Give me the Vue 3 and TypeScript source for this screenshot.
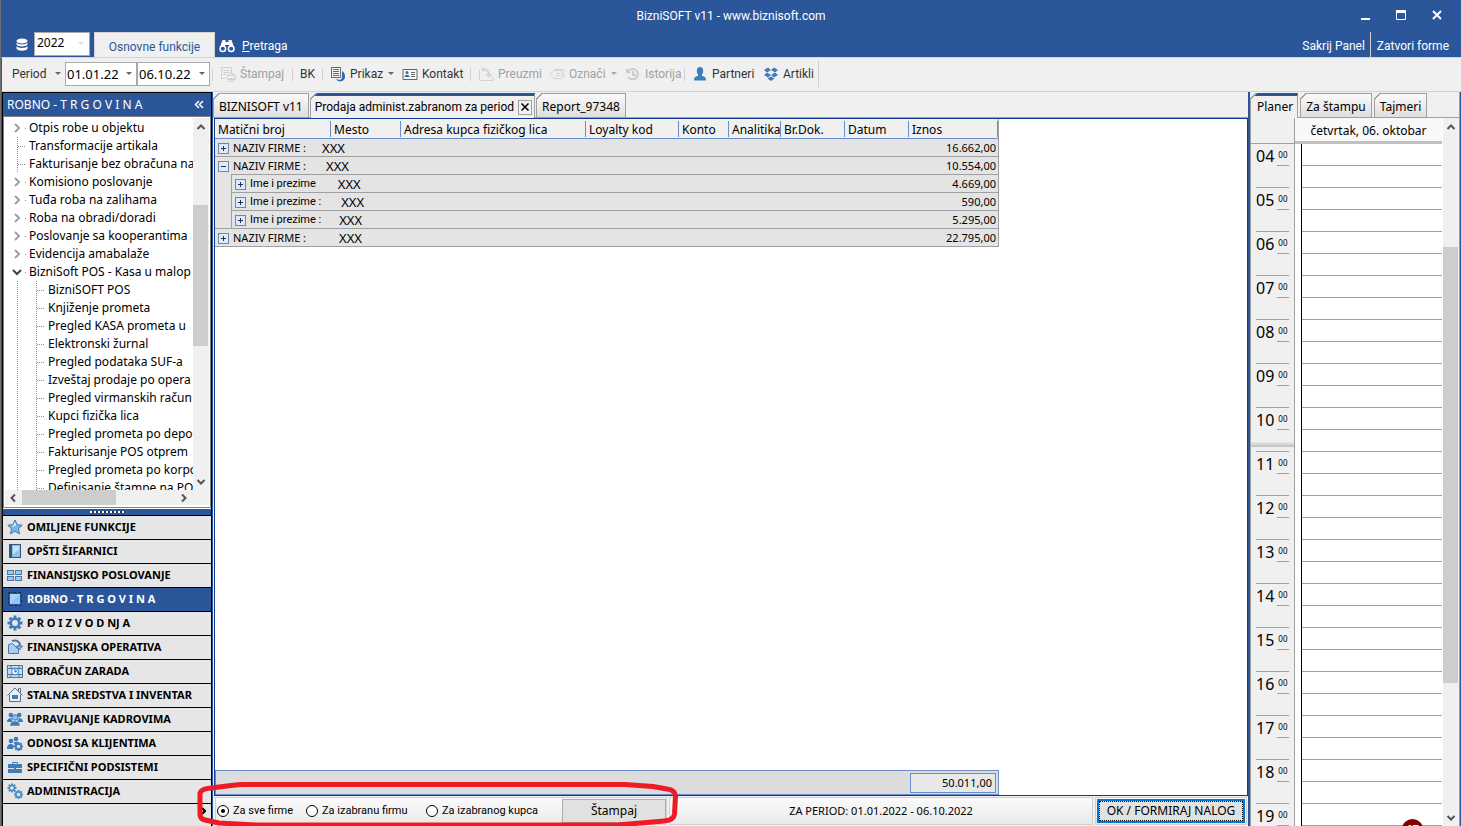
<script setup lang="ts">
import { ref } from 'vue'

interface TreeNode {
  label: string
  level: 0 | 1
  state?: 'closed' | 'open'
}

interface NavItem {
  label: string
  icon: string
  active?: boolean
}

interface ReportRow {
  label: string
  value: string
  gap: number
  amount: string
  kind: 'group' | 'open' | 'child' | 'last'
}

const year = ref('2022')
const dateFrom = ref('01.01.22')
const dateTo = ref('06.10.22')
const scope = ref('sve')

const tree: TreeNode[] = [
  { label: 'Otpis robe u objektu', level: 0, state: 'closed' },
  { label: 'Transformacije artikala', level: 0 },
  { label: 'Fakturisanje bez obračuna na', level: 0 },
  { label: 'Komisiono poslovanje', level: 0, state: 'closed' },
  { label: 'Tuđa roba na zalihama', level: 0, state: 'closed' },
  { label: 'Roba na obradi/doradi', level: 0, state: 'closed' },
  { label: 'Poslovanje sa kooperantima', level: 0, state: 'closed' },
  { label: 'Evidencija amabalaže', level: 0, state: 'closed' },
  { label: 'BizniSoft POS - Kasa u malop', level: 0, state: 'open' },
  { label: 'BizniSOFT POS', level: 1 },
  { label: 'Knjiženje prometa', level: 1 },
  { label: 'Pregled KASA prometa u', level: 1 },
  { label: 'Elektronski žurnal', level: 1 },
  { label: 'Pregled podataka SUF-a', level: 1 },
  { label: 'Izveštaj prodaje po opera', level: 1 },
  { label: 'Pregled virmanskih račun', level: 1 },
  { label: 'Kupci fizička lica', level: 1 },
  { label: 'Pregled prometa po depo', level: 1 },
  { label: 'Fakturisanje POS otprem', level: 1 },
  { label: 'Pregled prometa po korpo', level: 1 },
  { label: 'Definisanje štampe na PO', level: 1 }
]

const gear = (cx: number, cy: number, r: number, w: number, color: string): string => {
  let teeth = ''
  for (let i = 0; i < 8; i++) {
    teeth += `<rect x="${cx - w / 2}" y="${cy - r}" width="${w}" height="${r / 2}" transform="rotate(${i * 45} ${cx} ${cy})" fill="${color}"/>`
  }
  return `${teeth}<circle cx="${cx}" cy="${cy}" r="${r * 0.56}" fill="none" stroke="${color}" stroke-width="${r * 0.32}"/>`
}

const nav: NavItem[] = [
  {
    label: 'OMILJENE FUNKCIJE',
    icon: '<path d="M8 1l2.100 4.700 5.100.5-3.800 3.500 1.100 5.100L8 12.200l-4.500 2.600 1.100-5.100L.8 6.200l5.100-.5z" fill="#7fb4e4" stroke="#3f76b0"/><path d="M8 3l1.300 3.600L5 8z" fill="#d4ebfc"/>'
  },
  {
    label: 'OPŠTI ŠIFARNICI',
    icon: '<rect x="2.500" y="1.500" width="11" height="13" fill="#8fc1ee" stroke="#34557d"/><rect x="2" y="1" width="3" height="14" fill="#34557d"/><path d="M6 3h6v4L6 11z" fill="#c2e0f8"/>'
  },
  {
    label: 'FINANSIJSKO POSLOVANJE',
    icon: '<g fill="#9fc8ee" stroke="#4678ae"><rect x=".5" y="3.500" width="6" height="4"/><rect x="8.500" y="3.500" width="6" height="4"/><rect x=".5" y="9.500" width="6" height="4"/><rect x="8.500" y="9.500" width="6" height="4"/></g>'
  },
  {
    label: 'ROBNO - T R G O V I N A',
    active: true,
    icon: '<rect x="1.500" y="1.500" width="13" height="13" fill="none" stroke="#162e52" stroke-dasharray="3 2"/><rect x="3" y="3" width="10" height="10" fill="#8fc4f6"/><path d="M3 3h10L3 13z" fill="#a9d2f8"/>'
  },
  { label: 'P R O I Z V O D NJ A', icon: gear(8, 8, 7.5, 3, '#3f7cba') },
  {
    label: 'FINANSIJSKA OPERATIVA',
    icon: '<path d="M1.500 5.500l4-1 6 6v4h-10z" fill="#a7cdf0" stroke="#4678ae"/><path d="M5 2c5-1.500 8 1 8 5" fill="none" stroke="#4678ae" stroke-width="2"/><path d="M9.500 7h6L12.500 11z" fill="#8ebdec" stroke="#4678ae"/>'
  },
  {
    label: 'OBRAČUN ZARADA',
    icon: '<rect x=".5" y="2.500" width="15" height="12" fill="#bfdcf5" stroke="#4678ae"/><path d="M1 5.500h14M1 11.500h14M4 3v3M12 3v3M4 11v3M12 11v3" stroke="#4678ae"/><circle cx="8" cy="8.500" r="3.500" fill="#e6f3fd" stroke="#4678ae"/><path d="M8 6v3l2-1" fill="none" stroke="#33608f"/>'
  },
  {
    label: 'STALNA SREDSTVA I INVENTAR',
    icon: '<path d="M.5 8.500L8 1l7.500 7.500M2.500 7.500v7h11v-7M11.500 4.500v-3h2v5" fill="#e9eef4" stroke="#55738f"/><rect x="5" y="8" width="6" height="4" fill="#3f7cba"/>'
  },
  {
    label: 'UPRAVLJANJE KADROVIMA',
    icon: '<g fill="#3f7cba"><circle cx="3.800" cy="4" r="2.300"/><circle cx="12.200" cy="4" r="2.300"/><path d="M0 11c0-3 2-4 4-4l2 4zM16 11c0-3-2-4-4-4l-2 4z"/></g><circle cx="8" cy="6.500" r="2.800" fill="#8ebdec" stroke="#3f7cba"/><path d="M3 15c0-4 2.500-5 5-5s5 1 5 5z" fill="#3f7cba" stroke="#e6e6e6" stroke-width=".5"/>'
  },
  {
    label: 'ODNOSI SA KLIJENTIMA',
    icon: '<g fill="#3f7cba"><circle cx="4" cy="6" r="2.300"/><circle cx="9" cy="4" r="2.300"/><path d="M0 14c0-4 2-5 4-5 1.500 0 2.500 1 3 2l-1 3zM6.500 7.500c3-1.500 5-.5 5 1L8 10z"/></g>' + gear(11.5, 11.5, 4.5, 2, '#3f7cba')
  },
  {
    label: 'SPECIFIČNI PODSISTEMI',
    icon: '<path d="M1 5h14v4H1zM1 10h14v4H1z" fill="#3f7cba"/><path d="M5.500 5V3.500h5V5" fill="none" stroke="#3f7cba"/><rect x="7" y="8.500" width="2" height="2" fill="#3f7cba"/>'
  },
  { label: 'ADMINISTRACIJA', icon: gear(5, 5, 4.5, 2, '#4f8cc6') + gear(11.5, 11.5, 4.5, 2, '#4f8cc6') }
]

const columns: string[] = [
  'Matični broj',
  'Mesto',
  'Adresa kupca fizičkog lica',
  'Loyalty kod',
  'Konto',
  'Analitika',
  'Br.Dok.',
  'Datum',
  'Iznos'
]

const rows: ReportRow[] = [
  { label: 'NAZIV FIRME :', value: 'XXX', gap: 16, amount: '16.662,00', kind: 'group' },
  { label: 'NAZIV FIRME :', value: 'XXX', gap: 20, amount: '10.554,00', kind: 'open' },
  { label: 'Ime i prezime', value: 'XXX', gap: 22, amount: '4.669,00', kind: 'child' },
  { label: 'Ime i prezime :', value: 'XXX', gap: 20, amount: '590,00', kind: 'child' },
  { label: 'Ime i prezime :', value: 'XXX', gap: 18, amount: '5.295,00', kind: 'last' },
  { label: 'NAZIV FIRME :', value: 'XXX', gap: 33, amount: '22.795,00', kind: 'group' }
]

const hours: string[] = Array.from({ length: 16 }, (_, i) => String(i + 4).padStart(2, '0'))
</script>

<template>
  <div class="app">
    <header class="titlebar">
      <span class="title">BizniSOFT v11 - www.biznisoft.com</span>
      <div class="window-buttons">
        <button type="button" aria-label="Minimize">
          <svg width="12" height="12"><path d="M2 10h9" stroke="#fff" stroke-width="2" /></svg>
        </button>
        <button type="button" aria-label="Maximize">
          <svg width="12" height="12"><path d="M1.500 1.500h9v9h-9z" fill="none" stroke="#fff" /><path d="M1 2.500h10" stroke="#fff" stroke-width="3" /></svg>
        </button>
        <button type="button" aria-label="Close">
          <svg width="12" height="12"><path d="M2 2l8 8M10 2l-8 8" stroke="#fff" stroke-width="2" /></svg>
        </button>
      </div>
    </header>

    <nav class="ribbon">
      <svg class="db" width="12" height="14" fill="#fff">
        <ellipse cx="6" cy="3" rx="5.500" ry="2.500" />
        <path d="M.5 4.500c1 2.500 10 2.500 11 0v2c-1 2.500-10 2.500-11 0zM.5 8c1 2.500 10 2.500 11 0v2.500c-1 3-10 3-11 0z" />
      </svg>
      <label class="year">
        <select v-model="year" aria-label="Godina">
          <option>2022</option>
        </select>
        <i class="arrow faint"></i>
      </label>
      <button type="button" class="ribbon-tab">Osnovne funkcije</button>
      <button type="button" class="ribbon-link search">
        <svg width="16" height="14" fill="#fff">
          <path d="M3.500 1h3v2h3V1h3l2.500 7h-5V6H6v2H1z" />
          <circle cx="3.800" cy="9.800" r="2.800" fill="#2b579a" stroke="#fff" stroke-width="1.500" />
          <circle cx="12.200" cy="9.800" r="2.800" fill="#2b579a" stroke="#fff" stroke-width="1.500" />
        </svg>
        <span><u>P</u>retraga</span>
      </button>
      <div class="ribbon-right">
        <button type="button" class="ribbon-link">Sakrij Panel</button>
        <button type="button" class="ribbon-link bordered">Zatvori forme</button>
      </div>
    </nav>

    <div class="toolbar">
      <button type="button" class="tool period">Period<i class="arrow"></i></button>
      <label class="date"><input v-model="dateFrom" aria-label="Od datuma" /><i class="arrow"></i></label>
      <label class="date"><input v-model="dateTo" aria-label="Do datuma" /><i class="arrow"></i></label>
      <button type="button" class="tool sep" disabled>
        <svg width="16" height="16" fill="none" stroke="#d0d0d0">
          <path d="M1.500 1.500h10v6M1.500 1.500v11h4M3.500 4.500h6M3.500 6.500h6M3.500 8.500h3M7.500 9.500h8v4h-8zM9.500 9.500v-2h4v2M9.500 12.500h4v3h-4z" />
        </svg>
        Štampaj
      </button>
      <button type="button" class="tool sep">BK</button>
      <button type="button" class="tool sep">
        <svg width="16" height="16">
          <path d="M12 5v6c0 3-3 3.500-6 2 2 4 9 3 9-2.500 0-2.500-1-4.500-3-5.500z" fill="#2f6db0" />
          <path d="M1.500 1.500h9v10h-9z" fill="#f8f8f8" stroke="#666" />
          <path d="M3 3.500h6M3 5.500h6M3 7.500h6M3 9.500h6" stroke="#666" />
        </svg>
        Prikaz<i class="arrow push"></i>
      </button>
      <button type="button" class="tool">
        <svg width="16" height="16">
          <path d="M1 3.500h14v10H1z" fill="#f8f8f8" stroke="#666" />
          <circle cx="5" cy="6.500" r="1.500" fill="#2f6db0" />
          <path d="M2.500 11c0-3 5-3 5 0z" fill="#2f6db0" />
          <path d="M9 6.500h4M9 8.500h4M9 10.500h4" stroke="#666" />
        </svg>
        Kontakt
      </button>
      <button type="button" class="tool sep" disabled>
        <svg width="16" height="16" fill="none" stroke="#d4d4d4">
          <path d="M1.500 4v10.500H15V11" />
          <path d="M4 3c5 0 7 2 7 6" stroke-width="2" />
          <path d="M7.500 8h7L11 12zM6 1v5L3 3.500z" fill="#d4d4d4" stroke="none" />
        </svg>
        Preuzmi
      </button>
      <button type="button" class="tool" disabled>
        <svg width="16" height="16" fill="none" stroke="#d4d4d4">
          <path d="M1 8.500l4-4h8v8H5zM5 3.500h10v8M7 7.500h4M7 9.500h4" />
        </svg>
        Označi<i class="arrow push grey"></i>
      </button>
      <button type="button" class="tool" disabled>
        <svg width="16" height="16" fill="none" stroke="#cbcbcb" stroke-width="2">
          <path d="M3.500 5a5.200 5.200 0 1 1-.2 6M8 5v4h3" />
          <path d="M1 2v5h5z" fill="#cbcbcb" stroke="none" />
        </svg>
        Istorija
      </button>
      <button type="button" class="tool sep">
        <svg width="16" height="16" fill="#3f7cba">
          <ellipse cx="8" cy="5" rx="3.200" ry="4" />
          <path d="M6 8h4v2c3 .5 4 1.500 4 4.500H2c0-3 1-4 4-4.500z" />
        </svg>
        Partneri
      </button>
      <button type="button" class="tool">
        <svg width="16" height="16" fill="#3f7cba">
          <path d="M1 4l4-2.500L8 4 4 6.500zM8 4l3-2.500L15 4l-3 2.500zM1 9l3-2.500L8 9l-3 2.500zM8 9l4-2.500L15 9l-4 2.500zM4.500 12.500l3.500-2 3.500 2L8 15z" />
        </svg>
        Artikli
      </button>
    </div>

    <main class="workspace">
      <aside class="sidebar">
        <h2 class="side-head">
          <span>ROBNO - T R G O V I N A</span>
          <svg width="10" height="9" fill="none" stroke="#fff" stroke-width="1.500"><path d="M5 1L1.500 4.500 5 8M9 1L5.500 4.500 9 8" /></svg>
        </h2>
        <div class="tree-box">
          <ul class="tree">
            <li v-for="node in tree" :key="node.label" :class="['lvl' + node.level, node.state]">
              <svg v-if="node.state === 'closed'" class="twist" width="10" height="10"><path d="M3 1l4 4-4 4" fill="none" stroke="#a0a0a0" stroke-width="2" /></svg>
              <svg v-if="node.state === 'open'" class="twist" width="10" height="10"><path d="M1 3l4 4 4-4" fill="none" stroke="#404040" stroke-width="2" /></svg>
              <span>{{ node.label }}</span>
            </li>
          </ul>
          <div class="vscroll">
            <svg width="10" height="10"><path d="M1.500 7L5 3.500 8.500 7" fill="none" stroke="#555" stroke-width="2" /></svg>
            <div class="track"><i class="thumb"></i></div>
            <svg width="10" height="10"><path d="M1.500 3L5 6.500 8.500 3" fill="none" stroke="#555" stroke-width="2" /></svg>
          </div>
          <div class="hscroll">
            <svg width="10" height="10"><path d="M7 1.500L3.500 5 7 8.500" fill="none" stroke="#555" stroke-width="2" /></svg>
            <i class="thumb"></i>
            <svg width="10" height="10"><path d="M3 1.500L6.500 5 3 8.500" fill="none" stroke="#555" stroke-width="2" /></svg>
          </div>
        </div>
        <div class="splitter"><i></i></div>
        <button v-for="item in nav" :key="item.label" type="button" :class="['nav-item', { active: item.active }]">
          <svg width="16" height="16" v-html="item.icon"></svg>
          {{ item.label }}
        </button>
        <div class="nav-more">
          <svg width="5" height="8"><path d="M1 1l3 3-3 3" fill="none" stroke="#000" stroke-width="2" /></svg>
        </div>
      </aside>

      <section class="center">
        <div class="tabs">
          <button type="button" class="tab">BIZNISOFT v11</button>
          <div class="tab current">
            <button type="button" class="tab-text">Prodaja administ.zabranom za period</button>
            <button type="button" class="tab-close" aria-label="Zatvori">
              <svg width="10" height="10"><path d="M1.500 1.500l7 7M8.500 1.500l-7 7" stroke="#000" stroke-width="1.500" /></svg>
            </button>
          </div>
          <button type="button" class="tab">Report_97348</button>
        </div>

        <div class="grid-box">
          <table class="report">
            <colgroup>
              <col class="c1" /><col class="c2" /><col class="c3" /><col class="c4" /><col class="c5" />
              <col class="c6" /><col class="c7" /><col class="c7" /><col class="c9" />
            </colgroup>
            <thead>
              <tr>
                <th v-for="col in columns" :key="col" scope="col"><span>{{ col }}</span></th>
              </tr>
            </thead>
            <tbody>
              <tr v-for="(row, i) in rows" :key="i" :class="row.kind">
                <td colspan="8">
                  <div class="cell">
                    <svg class="expander" width="11" height="11">
                      <rect x=".5" y=".5" width="10" height="10" fill="#dfe9f7" stroke="#6c87b0" />
                      <path d="M3 5.500h5" stroke="#1c3560" />
                      <path v-if="row.kind !== 'open'" d="M5.500 3v5" stroke="#1c3560" />
                    </svg>
                    <span class="caption">{{ row.label }}</span>
                    <span class="value" :style="{ marginLeft: row.gap + 'px' }">{{ row.value }}</span>
                  </div>
                </td>
                <td class="amount">{{ row.amount }}</td>
              </tr>
            </tbody>
          </table>
          <div class="grid-foot"><output>50.011,00</output></div>
        </div>

        <footer class="actions">
          <form class="panel options" @submit.prevent>
            <label><input v-model="scope" type="radio" value="sve" name="scope" />Za sve firme</label>
            <label><input v-model="scope" type="radio" value="firma" name="scope" />Za izabranu firmu</label>
            <label><input v-model="scope" type="radio" value="kupac" name="scope" />Za izabranog kupca</label>
            <button type="button" class="print">Štampaj</button>
          </form>
          <div class="panel range">ZA PERIOD: 01.01.2022 - 06.10.2022</div>
          <div class="panel confirm"><button type="button">OK / FORMIRAJ NALOG</button></div>
          <svg class="marker" width="484" height="46" fill="none" stroke="#ed1c24" stroke-width="5" stroke-linejoin="round">
            <path d="M44 4.500H428L456 6.500 470 9Q478 10 478.500 16L477.500 34Q477 40 467 41L438 43.500 420 45H60L22 43 8 40Q3 39 3 34V14Q3 9 14 8L34 5.500Z" />
          </svg>
        </footer>
      </section>

      <aside class="planner">
        <div class="tabs">
          <button type="button" class="tab current solo">Planer</button>
          <button type="button" class="tab">Za štampu</button>
          <button type="button" class="tab">Tajmeri</button>
        </div>
        <div class="day">
          <div class="ruler">
            <div class="corner"></div>
            <div v-for="h in hours" :key="h" class="hour">
              <span>{{ h }}</span><small>00</small>
            </div>
            <i class="now"></i>
          </div>
          <div class="slots">
            <div class="date-head">četvrtak, 06. oktobar</div>
            <div class="lines"></div>
          </div>
          <div class="vscroll tall">
            <svg width="10" height="10"><path d="M1.500 7L5 3.500 8.500 7" fill="none" stroke="#555" stroke-width="2" /></svg>
            <div class="track"><i class="thumb"></i></div>
            <svg width="10" height="10"><path d="M1.500 3L5 6.500 8.500 3" fill="none" stroke="#555" stroke-width="2" /></svg>
          </div>
          <b class="badge">17</b>
        </div>
      </aside>
    </main>
  </div>
</template>

<style>
html,
body {
  background: #f0f0f0;
}
</style>

<style scoped>
.app,
.app * {
  box-sizing: border-box;
}
.app {
  display: flex;
  flex-direction: column;
  height: 100vh;
  overflow: hidden;
  border-left: 1px solid #707070;
  background: #f0f0f0;
  color: #000;
  font: 12px/16px 'Noto Sans', 'Open Sans', sans-serif;
}
button,
input,
select {
  margin: 0;
  padding: 0;
  border: 0;
  border-radius: 0;
  background: none;
  color: inherit;
  font: inherit;
  white-space: nowrap;
}
svg {
  flex: none;
}
.titlebar,
.ribbon-tab,
.ribbon-link,
.tool,
.tab-text,
.options label,
.child .caption,
.last .caption {
  font-family: Roboto, 'Noto Sans', sans-serif;
}
.titlebar {
  position: relative;
  display: flex;
  align-items: center;
  justify-content: center;
  flex: none;
  height: 32px;
  background: #2b579a;
  color: #fff;
}
.window-buttons {
  position: absolute;
  right: 18px;
  top: 9px;
  display: flex;
  gap: 24px;
}
.window-buttons button {
  display: flex;
}
.ribbon {
  display: flex;
  align-items: flex-start;
  flex: none;
  height: 25px;
  background: #2b579a;
  color: #fff;
}
.db {
  margin: 6px 6px 0 15px;
}
.year {
  position: relative;
  width: 56px;
  height: 24px;
  border: 1px solid #a9a9a9;
  background: #fff;
}
.year select {
  width: 100%;
  height: 20px;
  padding: 0 2px;
  appearance: none;
  color: #000;
}
.year .arrow {
  position: absolute;
  right: 5px;
  top: 9px;
}
.arrow {
  flex: none;
  width: 0;
  height: 0;
  border: 3px solid transparent;
  border-top-color: #666;
  border-bottom: 0;
}
.arrow.faint {
  border-top-color: #ddd;
}
.arrow.grey {
  border-top-color: #aaa;
}
.ribbon-tab {
  width: 121px;
  height: 25px;
  margin-left: 4px;
  padding-top: 4px;
  border: 1px solid #d4d4d4;
  border-bottom: 0;
  background: #f0f0f0;
  color: #2b579a;
}
.ribbon-link {
  display: flex;
  align-items: center;
  gap: 7px;
  height: 25px;
  padding-top: 2px;
}
.search {
  margin-left: 4px;
}
.ribbon-right {
  display: flex;
  margin-left: auto;
  padding-right: 7px;
}
.ribbon-right .ribbon-link {
  padding-right: 5px;
}
.ribbon-right .bordered {
  padding-left: 6px;
  border-left: 1px solid #d4d4d4;
}
.toolbar {
  display: grid;
  grid-template-columns: 63px 72px 75px 80px 30px 78px 70px 77px 76px 61px 77px 58px;
  flex: none;
  align-items: center;
  height: 35px;
  padding-bottom: 2px;
  border-top: 1px solid #d4d4d4;
  border-bottom: 1px solid #d4d4d4;
  border-left: 1px solid #2b579a;
  color: #333;
}
.tool {
  position: relative;
  display: flex;
  align-items: center;
  gap: 4px;
  height: 26px;
  padding-left: 2px;
}
.tool:disabled {
  color: #a0a0a0;
}
.tool.sep {
  padding-left: 8px;
}
.tool.sep::before {
  content: '';
  position: absolute;
  left: 0;
  top: 7px;
  height: 13px;
  border-left: 1px solid #d0d0d0;
}
.tool.period {
  justify-content: space-between;
  padding: 0 4px 0 10px;
}
.tool:last-child {
  border-right: 1px solid #d0d0d0;
}
.push {
  position: absolute;
  right: 6px;
  top: 11px;
}
.date {
  display: flex;
  align-items: center;
  height: 24px;
  padding-right: 4px;
  border: 1px solid #a9a9a9;
  background: #fff;
}
.date input {
  flex: 1;
  min-width: 0;
  padding-left: 1px;
  color: #000;
  font-size: 13px;
  outline: 0;
}
.date + .date {
  margin-right: 2px;
}
.workspace {
  display: flex;
  flex: 1;
  min-height: 0;
  border-left: 1px solid #2b579a;
  border-right: 1px solid #2b579a;
}
.sidebar {
  display: flex;
  flex-direction: column;
  flex: none;
  width: 210px;
  border: 1px solid #000;
  border-bottom: 0;
  background: #e6e6e6;
}
.side-head {
  display: flex;
  align-items: center;
  justify-content: space-between;
  flex: none;
  height: 23px;
  margin: 0;
  padding: 0 7px 0 4px;
  background: #2b579a;
  color: #fff;
  font-size: 12px;
  font-weight: 400;
}
.tree-box {
  display: grid;
  grid-template-columns: 1fr 16px;
  grid-template-rows: 1fr 15px;
  flex: 1;
  min-height: 0;
  padding: 1px 1px 2px;
  border: 1px solid #808080;
  background: #fff;
}
.tree {
  min-height: 0;
  margin: 0;
  padding: 1px 0 0;
  overflow: hidden;
  list-style: none;
  background: #fff;
}
.tree li {
  position: relative;
  display: flex;
  align-items: center;
  height: 18px;
  padding-left: 24px;
  background:
    repeating-linear-gradient(#909090 0 1px, transparent 1px 2px) 12px 0 / 1px 100% no-repeat,
    repeating-linear-gradient(90deg, #909090 0 1px, transparent 1px 2px) 13px 9px / 8px 1px no-repeat;
  white-space: nowrap;
}
.tree li.closed,
.tree li.open {
  background: linear-gradient(#909090, #909090) 20px 9px / 1px 1px no-repeat;
}
.tree li.lvl1 {
  padding-left: 43px;
  background:
    repeating-linear-gradient(#909090 0 1px, transparent 1px 2px) 12px 0 / 1px 100% no-repeat,
    repeating-linear-gradient(#909090 0 1px, transparent 1px 2px) 31px 0 / 1px 100% no-repeat,
    repeating-linear-gradient(90deg, #909090 0 1px, transparent 1px 2px) 32px 9px / 8px 1px no-repeat;
}
.twist {
  position: absolute;
  left: 7px;
  top: 4px;
}
.vscroll {
  display: flex;
  flex-direction: column;
  align-items: center;
  min-height: 0;
  padding: 4px 0 3px;
  background: #f0f0f0;
}
.vscroll .track {
  display: flex;
  flex: 1;
  flex-direction: column;
  width: 100%;
}
.vscroll .track::before {
  content: '';
  flex: 72;
}
.vscroll .track::after {
  content: '';
  flex: 130;
}
.thumb {
  background: #cdcdcd;
}
.vscroll .thumb {
  flex: 140;
  width: 15px;
}
.vscroll.tall .track::before {
  flex: 115;
}
.vscroll.tall .thumb {
  flex: 434;
}
.hscroll {
  display: flex;
  align-items: center;
  grid-column: 1 / 3;
  padding: 0 20px 0 3px;
  background: #f0f0f0;
}
.hscroll .thumb {
  width: 94px;
  height: 100%;
  margin-left: 4px;
  margin-right: auto;
}
.splitter {
  display: flex;
  align-items: center;
  justify-content: center;
  flex: none;
  height: 8px;
  border-top: 1px solid #fff;
  border-bottom: 1px solid #000;
  background: #2b579a;
}
.splitter i {
  width: 35px;
  height: 2px;
  background: repeating-linear-gradient(90deg, #fff 0 2px, #1a3050 2px 4px);
}
.nav-item {
  display: flex;
  align-items: center;
  flex: none;
  gap: 4px;
  height: 24px;
  padding: 0 0 2px 4px;
  border-bottom: 1px solid #000;
  font-size: 11px;
  font-weight: 700;
}
.nav-item.active {
  background: #2b579a;
  color: #fff;
}
.nav-more {
  display: flex;
  flex: none;
  justify-content: flex-end;
  height: 22px;
  padding: 3px 5px;
}
.center {
  display: flex;
  flex: 1;
  flex-direction: column;
  min-width: 0;
  border-left: 1px solid #2b579a;
}
.tabs {
  display: flex;
  flex: none;
  gap: 1px;
  height: 26px;
  padding-top: 1px;
  border-bottom: 1px solid #a0a0a0;
}
.tab {
  position: relative;
  display: flex;
  align-items: center;
  height: 24px;
  padding: 2px 5px 0;
  border: 1px solid #a0a0a0;
  border-bottom: 0;
  background: linear-gradient(#fafafa, #dedede);
}
.tab::before {
  content: '';
  position: absolute;
  left: -1px;
  top: -1px;
  width: 7px;
  height: 7px;
  background: linear-gradient(135deg, #f0f0f0 42%, #a0a0a0 42% 54%, transparent 54%);
}
.tab.current {
  height: 25px;
  border-top: 3px solid #2b579a;
  background: #f0f0f0;
  padding: 0 2px 0 4px;
}
.tab.current::before {
  top: -3px;
}
.planner .tab.solo {
  padding: 0 4px 0 6px;
}
.tab-close {
  display: flex;
  align-items: center;
  justify-content: center;
  width: 14px;
  height: 15px;
  margin-left: 4px;
  border: 1px solid #a0a0a0;
}
.grid-box {
  display: flex;
  flex: 1;
  flex-direction: column;
  min-height: 0;
  justify-content: space-between;
  margin-left: 1px;
  border: 1px solid #0f3c92;
  background: #fff;
}
.report {
  width: 784px;
  border-collapse: separate;
  border-spacing: 0;
  border-right: 1px solid #a0a0a0;
  table-layout: fixed;
}
.c1 { width: 116px; }
.c2 { width: 70px; }
.c3 { width: 185px; }
.c4 { width: 93px; }
.c5 { width: 50px; }
.c6 { width: 52px; }
.c7 { width: 64px; }
.c9 { width: 89px; }
.report th {
  height: 20px;
  padding: 2px 0 1px;
  border-bottom: 1px solid #6a8ccb;
  background: #f0f0f0;
  font-weight: 400;
  line-height: 18px;
  text-align: left;
  white-space: nowrap;
}
.report th span {
  display: block;
  height: 16px;
  padding-left: 3px;
  border-right: 1px solid #6a8ccb;
}
.report td {
  height: 18px;
  padding: 0;
  background: linear-gradient(#a0a0a0, #a0a0a0) 0 100% / 100% 1px no-repeat #e4e4e4;
  font-size: 11px;
  line-height: 16px;
}
.open td:first-child,
.child td:first-child {
  background-position: right bottom;
  background-size: calc(100% - 16px) 1px;
}
.cell {
  display: flex;
  align-items: center;
  height: 18px;
  padding-left: 3px;
}
.child .cell,
.last .cell {
  margin-left: 16px;
  border-left: 1px solid #a0a0a0;
}
.expander {
  margin-right: 4px;
}
.value {
  font-size: 13px;
}
.report .amount {
  padding-right: 2px;
  text-align: right;
}
.grid-foot {
  display: flex;
  justify-content: flex-end;
  width: 784px;
  height: 25px;
  padding: 2px;
  border: 1px solid #6a8ccb;
  background: #dcdcdc;
}
.grid-foot output {
  width: 86px;
  height: 20px;
  padding: 1px 3px 0;
  border: 1px solid #6a8ccb;
  background: #e8e8e8;
  font-size: 11px;
  text-align: right;
}
.actions {
  position: relative;
  display: flex;
  flex: none;
  gap: 2px;
  height: 30px;
  padding: 1px 1px 1px 2px;
  font-size: 11px;
}
.panel {
  display: flex;
  align-items: center;
  border: 1px solid #d0d0d0;
  background: linear-gradient(#fbfbfb, #e9e9e9);
}
.options {
  flex: none;
  width: 452px;
}
.options label {
  display: flex;
  align-items: center;
  width: 120px;
  gap: 4px;
  padding-left: 1px;
  white-space: nowrap;
}
.options label:first-child {
  width: 89px;
}
.options input {
  display: grid;
  place-items: center;
  width: 12px;
  height: 12px;
  appearance: none;
  border: 1px solid #000;
  border-radius: 50%;
  background: #fff;
}
.options input:checked::before {
  content: '';
  width: 4px;
  height: 4px;
  border-radius: 50%;
  background: #000;
}
.print {
  width: 104px;
  height: 24px;
  margin-left: auto;
  border: 1px solid #adadad;
  background: #e1e1e1;
  font-size: 12px;
}
.range {
  flex: 1;
  justify-content: center;
}
.confirm {
  padding: 0 1px;
}
.confirm button {
  width: 148px;
  height: 24px;
  border: 2px solid #0078d7;
  background: #e1e1e1;
  outline: 1px dotted #000;
  outline-offset: -3px;
  font-size: 12px;
}
.marker {
  position: absolute;
  left: -16px;
  top: -16px;
  pointer-events: none;
}
.planner {
  display: flex;
  flex: none;
  flex-direction: column;
  width: 212px;
  border-left: 2px solid #2b579a;
  border-right: 1px solid #a0a0a0;
}
.planner .tabs {
  gap: 2px;
}
.day {
  position: relative;
  display: grid;
  grid-template-columns: 44px 1fr 16px;
  flex: 1;
  min-height: 0;
  border-left: 1px solid #a0a0a0;
  overflow: hidden;
}
.ruler {
  position: relative;
  min-height: 0;
  overflow: hidden;
  border-right: 1px solid #a0a0a0;
}
.corner {
  height: 26px;
  border-bottom: 1px solid #a0a0a0;
}
.hour {
  position: relative;
  display: flex;
  align-items: flex-start;
  gap: 4px;
  height: 44px;
  margin: 0 5px;
  border-bottom: 1px solid #a0a0a0;
}
.hour::after {
  content: '';
  position: absolute;
  right: 0;
  top: 21px;
  width: 12px;
  border-top: 1px solid #a0a0a0;
}
.hour span {
  font-size: 16px;
  line-height: 24px;
}
.hour small {
  font-size: 8px;
  line-height: 22px;
}
.now {
  position: absolute;
  left: 0;
  right: 0;
  top: 324px;
  height: 5px;
  background: linear-gradient(#e8e8e8, #c0c0c0);
}
.slots {
  display: flex;
  flex-direction: column;
  min-height: 0;
  padding-right: 1px;
  background: #fff;
}
.date-head {
  flex: none;
  height: 26px;
  padding-top: 5px;
  border-bottom: 3px solid #c0c0c0;
  background: #f8f8f8;
  text-align: center;
}
.lines {
  flex: 1;
  margin-left: 6px;
  border-left: 1px solid #000;
  background: repeating-linear-gradient(transparent 0 21px, #a0a0a0 21px 22px);
}
.badge {
  position: absolute;
  right: 36px;
  bottom: -14px;
  width: 21px;
  height: 21px;
  border-radius: 50%;
  background: #800000;
  color: #fff;
  font-size: 11px;
  line-height: 19px;
  text-align: center;
}
</style>
